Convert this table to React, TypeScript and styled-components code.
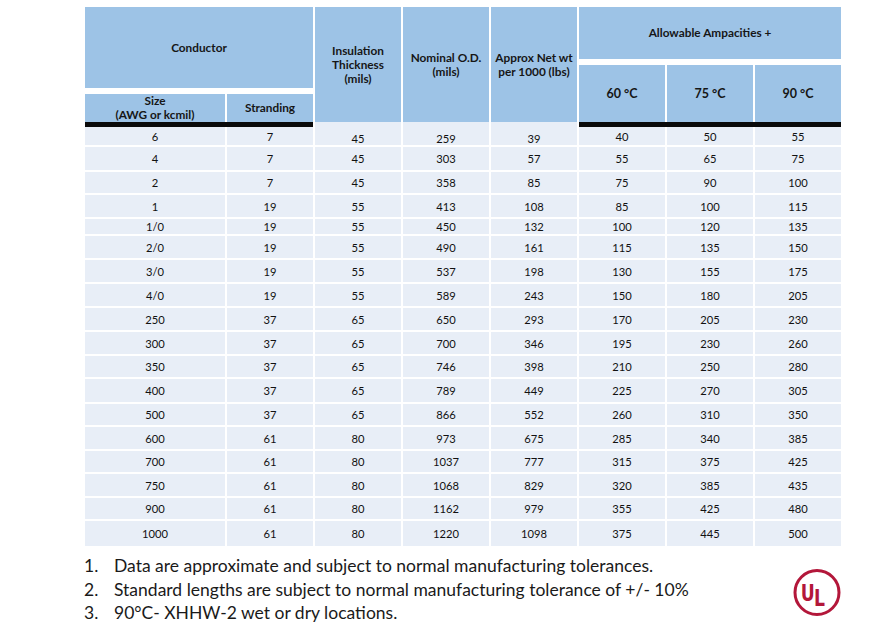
import React from "react";
import styled, { createGlobalStyle } from "styled-components";

const GlobalStyle = createGlobalStyle`
  html, body { margin: 0; padding: 0; background: #ffffff; }
  body { font-family: Lato, "Open Sans", Arial, sans-serif; color: #111; }
`;

const ROWS: string[][] = [
  ["6", "7", "45", "259", "39", "40", "50", "55"],
  ["4", "7", "45", "303", "57", "55", "65", "75"],
  ["2", "7", "45", "358", "85", "75", "90", "100"],
  ["1", "19", "55", "413", "108", "85", "100", "115"],
  ["1/0", "19", "55", "450", "132", "100", "120", "135"],
  ["2/0", "19", "55", "490", "161", "115", "135", "150"],
  ["3/0", "19", "55", "537", "198", "130", "155", "175"],
  ["4/0", "19", "55", "589", "243", "150", "180", "205"],
  ["250", "37", "65", "650", "293", "170", "205", "230"],
  ["300", "37", "65", "700", "346", "195", "230", "260"],
  ["350", "37", "65", "746", "398", "210", "250", "280"],
  ["400", "37", "65", "789", "449", "225", "270", "305"],
  ["500", "37", "65", "866", "552", "260", "310", "350"],
  ["600", "61", "80", "973", "675", "285", "340", "385"],
  ["700", "61", "80", "1037", "777", "315", "375", "425"],
  ["750", "61", "80", "1068", "829", "320", "385", "435"],
  ["900", "61", "80", "1162", "979", "355", "425", "480"],
  ["1000", "61", "80", "1220", "1098", "375", "445", "500"],
];

const BODY_TRACKS = [20, 25, 23, 24, 17, 24, 24, 24, 24, 24, 23, 25, 23, 24, 23, 24, 23, 27];

const Page = styled.div`
  width: 874px;
  height: 643px;
  box-sizing: border-box;
  padding: 7px 0 0 85px;
  display: flex;
  flex-direction: column;
`;

const Table = styled.div`
  display: grid;
  width: 756px;
  grid-template-columns: 140px 86px 86px 86px 86px 86px 86px 86px;
  column-gap: 2px;
  grid-template-rows: 52px 6px 23px 6px 28px 5px ${BODY_TRACKS.map((h) => `${h}px`).join(" ")};
`;

const HeadCell = styled.div<{ $col: string; $row: string; $big?: boolean }>`
  grid-column: ${(p) => p.$col};
  grid-row: ${(p) => p.$row};
  background: #9dc3e6;
  display: flex;
  align-items: center;
  justify-content: center;
  text-align: center;
  font-weight: 700;
  font-size: ${(p) => (p.$big ? "12.5px" : "11.8px")};
  line-height: 14px;
  color: #161616;
`;

const Bar = styled.div<{ $col: string }>`
  grid-column: ${(p) => p.$col};
  grid-row: 6;
  background: #0a0a0a;
`;

const Cell = styled.div<{ $col: number; $row: string; $low?: boolean }>`
  grid-column: ${(p) => p.$col};
  grid-row: ${(p) => p.$row};
  background: #e8eef7;
  border-bottom: 2px solid #ffffff;
  display: flex;
  justify-content: center;
  align-items: ${(p) => (p.$low ? "flex-end" : "center")};
  font-size: 11.2px;
  line-height: 13px;
  color: #111;
`;

const Footer = styled.div`
  display: flex;
  justify-content: space-between;
  align-items: flex-start;
  width: 757px;
  margin: 6px 0 0 -1px;
`;

const Notes = styled.ol`
  margin: 0;
  padding: 0;
  list-style: none;
  font-size: 17.5px;
  line-height: 23.5px;
  color: #1a1a1a;
`;

const Note = styled.li`
  display: flex;
`;

const NoteNum = styled.span`
  width: 30px;
  flex: none;
`;

const Logo = styled.svg`
  width: 48px;
  height: 50px;
  margin-top: 14px;
  flex: none;
`;

const UL = () => (
  <Logo viewBox="0 0 48 50">
    <circle cx="24" cy="24.5" r="22" fill="#fff" stroke="#b3173a" strokeWidth="3" />
    <text
      x="10.5 28"
      y="33 38"
      transform="scale(0.75 1)"
      fontFamily="DejaVu Sans, Arial, sans-serif"
      fontWeight="700"
      fontSize="23"
      fill="#b3173a"
    >
      UL
    </text>
  </Logo>
);

export default function App() {
  return (
    <>
      <GlobalStyle />
      <Page>
        <Table>
          <HeadCell $col="1 / 3" $row="1 / 4">Conductor</HeadCell>
          <HeadCell $col="3" $row="1 / 6">
            Insulation
            <br />
            Thickness
            <br />
            (mils)
          </HeadCell>
          <HeadCell $col="4" $row="1 / 6">
            Nominal O.D.
            <br />
            (mils)
          </HeadCell>
          <HeadCell $col="5" $row="1 / 6">
            Approx Net wt
            <br />
            per 1000 (lbs)
          </HeadCell>
          <HeadCell $col="6 / 9" $row="1">Allowable Ampacities +</HeadCell>
          <HeadCell $col="1" $row="5">
            Size
            <br />
            (AWG or kcmil)
          </HeadCell>
          <HeadCell $col="2" $row="5">Stranding</HeadCell>
          <HeadCell $col="6" $row="3 / 6" $big>60 °C</HeadCell>
          <HeadCell $col="7" $row="3 / 6" $big>75 °C</HeadCell>
          <HeadCell $col="8" $row="3 / 6" $big>90 °C</HeadCell>
          <Bar $col="1 / 3" />
          <Bar $col="6 / 9" />
          {ROWS.map((row, r) =>
            row.map((v, c) => {
              const mid = c >= 2 && c <= 4;
              const first = r === 0;
              const rowSpec = first && mid ? "6 / 8" : String(r + 7);
              return (
                <Cell key={`${r}-${c}`} $col={c + 1} $row={rowSpec} $low={first && mid}>
                  {v}
                </Cell>
              );
            })
          )}
        </Table>
        <Footer>
          <Notes>
            <Note>
              <NoteNum>1.</NoteNum>Data are approximate and subject to normal manufacturing tolerances.
            </Note>
            <Note>
              <NoteNum>2.</NoteNum>Standard lengths are subject to normal manufacturing tolerance of +/- 10%
            </Note>
            <Note>
              <NoteNum>3.</NoteNum>90°C- XHHW-2 wet or dry locations.
            </Note>
          </Notes>
          <UL />
        </Footer>
      </Page>
    </>
  );
}
